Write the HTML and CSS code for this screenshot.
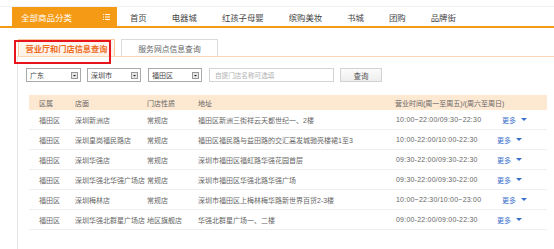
FILE: index.html
```html
<!DOCTYPE html>
<html lang="zh-CN">
<head>
<meta charset="utf-8">
<title>营业厅和门店信息查询</title>
<link rel="stylesheet" href="styles.css">
</head>
<body>
<div class="page">
  <div class="nav">
    <div class="cat">
      <span>全部商品分类</span>
      <svg class="cat-icon" width="7" height="6" viewBox="0 0 7 6"><g fill="#fff"><rect x="0" y="0" width="1" height="1"/><rect x="2" y="0" width="5" height="1"/><rect x="0" y="2.5" width="1" height="1"/><rect x="2" y="2.5" width="5" height="1"/><rect x="0" y="5" width="1" height="1"/><rect x="2" y="5" width="5" height="1"/></g></svg>
    </div>
    <ul class="nav-links">
      <li>首页</li>
      <li>电器城</li>
      <li>红孩子母婴</li>
      <li>缤购美妆</li>
      <li>书城</li>
      <li>团购</li>
      <li>品牌街</li>
    </ul>
  </div>

  <div class="tabs">
    <div class="tab tab-active">营业厅和门店信息查询</div>
    <div class="tab">服务网点信息查询</div>
  </div>
  <div class="highlight"></div>

  <div class="panel">
    <div class="filters">
      <div class="sel sel-w1"><span>广东</span><svg class="drop" width="7" height="7" viewBox="0 0 7 7"><rect x="0.5" y="0.5" width="6" height="6" fill="#e6e6e6" stroke="#999"/><path d="M2 3h3l-1.5 1.5z" fill="#222"/></svg></div>
      <div class="sel sel-w2"><span>深圳市</span><svg class="drop" width="7" height="7" viewBox="0 0 7 7"><rect x="0.5" y="0.5" width="6" height="6" fill="#e6e6e6" stroke="#999"/><path d="M2 3h3l-1.5 1.5z" fill="#222"/></svg></div>
      <div class="sel sel-w2"><span>福田区</span><svg class="drop" width="7" height="7" viewBox="0 0 7 7"><rect x="0.5" y="0.5" width="6" height="6" fill="#e6e6e6" stroke="#999"/><path d="M2 3h3l-1.5 1.5z" fill="#222"/></svg></div>
      <div class="txt">自提门店名称可选填</div>
      <div class="btn">查询</div>
    </div>

    <div class="table">
      <div class="row head">
        <div class="c c1">区属</div>
        <div class="c c2">店面</div>
        <div class="c c3">门店性质</div>
        <div class="c c4">地址</div>
        <div class="c c5">营业时间(周一至周五)/(周六至周日)</div>
        <div class="c c6"></div>
      </div>
      <div class="row">
        <div class="c c1">福田区</div>
        <div class="c c2">深圳新洲店</div>
        <div class="c c3">常规店</div>
        <div class="c c4">福田区新洲三街祥云天都世纪一、2楼</div>
        <div class="c c5 time">10:00~22:00/09:30~22:30</div>
        <div class="c c6 shift"><span class="more">更多<i class="tri"></i></span></div>
      </div>
      <div class="row">
        <div class="c c1">福田区</div>
        <div class="c c2">深圳皇岗福民路店</div>
        <div class="c c3">常规店</div>
        <div class="c c4">福田区福民路与益田路的交汇高发城驰亮楼裙1至3</div>
        <div class="c c5 time">10:00-22:00/10:00-22:30</div>
        <div class="c c6"><span class="more">更多<i class="tri"></i></span></div>
      </div>
      <div class="row">
        <div class="c c1">福田区</div>
        <div class="c c2">深圳华强店</div>
        <div class="c c3">常规店</div>
        <div class="c c4">深圳市福田区福虹路华强花园首层</div>
        <div class="c c5 time">09:30-22:00/09:30-22:30</div>
        <div class="c c6"><span class="more">更多<i class="tri"></i></span></div>
      </div>
      <div class="row">
        <div class="c c1">福田区</div>
        <div class="c c2">深圳华强北华强广场店</div>
        <div class="c c3">常规店</div>
        <div class="c c4">深圳市福田区华强北路华强广场</div>
        <div class="c c5 time">09:30-22:00/09:30-22:00</div>
        <div class="c c6"><span class="more">更多<i class="tri"></i></span></div>
      </div>
      <div class="row">
        <div class="c c1">福田区</div>
        <div class="c c2">深圳梅林店</div>
        <div class="c c3">常规店</div>
        <div class="c c4">深圳市福田区上梅林梅华路新世界百货2-3楼</div>
        <div class="c c5 time">10:00~22:30/10:00~23:00</div>
        <div class="c c6 shift"><span class="more">更多<i class="tri"></i></span></div>
      </div>
      <div class="row">
        <div class="c c1">福田区</div>
        <div class="c c2">深圳华强北群星广场店</div>
        <div class="c c3">地区旗舰店</div>
        <div class="c c4">华强北群星广场一、二楼</div>
        <div class="c c5 time">09:00-22:00/09:00-22:30</div>
        <div class="c c6"><span class="more">更多<i class="tri"></i></span></div>
      </div>
    </div>
  </div>
</div>
</body>
</html>
```

FILE: styles.css
```css
* { box-sizing: border-box; }
html, body { margin: 0; padding: 0; background: #fff; }
body {
  font-family: "Liberation Sans", "Noto Sans CJK SC", sans-serif;
  color: #666;
  font-size: 7px;
  overflow: hidden;
}
.page { position: relative; width: 554px; height: 249px; }

/* top navigation */
.nav {
  margin-top: 6px;
  border-top: 1px solid #f2f2f2;
  border-bottom: 2px solid #f59a14;
  height: 22px;
  display: flex;
  align-items: stretch;
}
.cat {
  margin-left: 12px;
  width: 105px;
  background: #f59a14;
  color: #fff;
  font-size: 8.5px;
  display: flex;
  align-items: center;
  justify-content: space-between;
  padding: 0 7px 0 9px;
}
.cat-icon { display: block; }
.nav-links {
  list-style: none;
  margin: 0;
  padding: 0 0 0 13px;
  display: flex;
  align-items: center;
  gap: 25px;
  font-size: 8.4px;
  color: #444;
}

/* tabs */
.tabs {
  display: flex;
  margin-top: 11px;
  padding-left: 18px;
  gap: 6px;
  height: 17px;
  align-items: flex-end;
}
.tab {
  width: 97px;
  height: 17px;
  border: 1px solid #dcdcdc;
  border-bottom: none;
  background: #fff;
  display: flex;
  align-items: center;
  justify-content: center;
  font-size: 7.8px;
  color: #666;
}
.tab-active {
  border-color: #f6c9a3;
  background: linear-gradient(#fffaf5, #fff1e6);
  color: #ee6a1c;
  font-weight: bold;
  font-size: 8.2px;
}
.highlight {
  position: absolute;
  left: 14px;
  top: 34px;
  width: 97px;
  height: 24px;
  border: 2px solid #e8141c;
}

/* panel */
.panel {
  margin-left: 17px;
  border-left: 1px solid #e6e6e6;
  border-top: 1px solid #fbd5b5;
  height: 200px;
  padding-top: 11px;
}
.filters {
  display: flex;
  align-items: center;
  padding-left: 8px;
  height: 14px;
}
.sel {
  height: 14px;
  border: 1px solid #a9a9a9;
  display: flex;
  align-items: center;
  justify-content: space-between;
  padding: 0 2px 0 3px;
  color: #444;
  font-size: 7px;
  margin-right: 6px;
}
.sel-w1 { width: 55px; }
.sel-w2 { width: 54px; margin-right: 7px; }
.drop { display: block; }
.txt {
  width: 125px;
  height: 14px;
  border: 1px solid #d4d4d4;
  color: #b0b0b0;
  font-size: 6.6px;
  display: flex;
  align-items: center;
  padding-left: 5px;
  margin-right: 6px;
}
.btn {
  width: 42px;
  height: 14px;
  border: 1px solid #d2d2d2;
  background: linear-gradient(#fbfbfb, #eeeeee);
  color: #555;
  font-size: 7.5px;
  display: flex;
  align-items: center;
  justify-content: center;
}

/* table */
.table {
  margin: 13px 0 0 11px;
  width: 518px;
}
.row {
  display: grid;
  grid-template-columns: 36px 72px 51px 197px 102px 60px;
  height: 20px;
  align-items: center;
  border-bottom: 1px solid #efefef;
  white-space: nowrap;
}
.row.head {
  height: 15px;
  background: #fde8d2;
  border-bottom: none;
}
.c { padding-left: 10px; overflow: visible; }
.time { letter-spacing: 0.22px; padding-left: 11px; }
.more {
  color: #3a6fcc;
  display: inline-flex;
  align-items: center;
}
.shift { padding-left: 15px; }
.tri {
  margin-left: 5px;
  width: 0;
  height: 0;
  border-left: 3px solid transparent;
  border-right: 3px solid transparent;
  border-top: 3px solid #3a6fcc;
}
```
